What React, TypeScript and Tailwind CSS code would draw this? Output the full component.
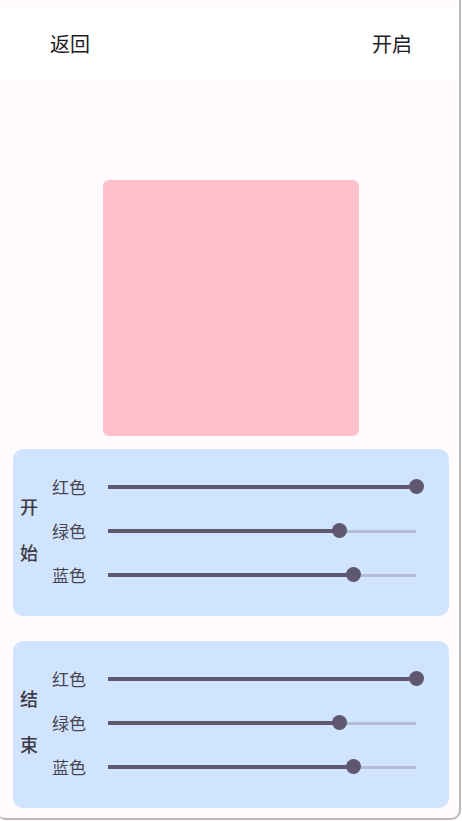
const font = { fontFamily: '"Noto Sans CJK SC", "Noto Sans", sans-serif' };

function Slider({ value }: { value: number }) {
  return (
    <div className="relative w-[308px] h-[16px]">
      <div className="absolute left-0 right-0 top-[7px] h-[3px] bg-[#b3bdd4]" />
      <div className="absolute left-0 top-[6.5px] h-[4px] bg-[#5f5670]" style={{ width: `${value * 100}%` }} />
      <div
        className="absolute top-[0.5px] w-[15px] h-[15px] -ml-[7.5px] rounded-full bg-[#5f5670]"
        style={{ left: `${value * 100}%` }}
      />
    </div>
  );
}

function ColorCard({ title, rgb }: { title: [string, string]; rgb: [number, number, number] }) {
  const names = ["红色", "绿色", "蓝色"];
  return (
    <div className="mx-[13px] h-[167px] rounded-[10px] bg-[#d1e4ff] flex items-center pl-[7px]">
      <div className="flex flex-col gap-[18px] pb-[8px] text-[18px] leading-[28px] font-medium text-[#3d3a44] w-[18px]">
        <span>{title[0]}</span>
        <span>{title[1]}</span>
      </div>
      <div className="flex flex-col gap-[16px] ml-[14px] pb-[4px]">
        {names.map((n, i) => (
          <div key={n} className="flex items-center h-[28px]">
            <span className="text-[17px] leading-[28px] text-[#49454f] w-[56px]">{n}</span>
            <Slider value={rgb[i] / 255} />
          </div>
        ))}
      </div>
    </div>
  );
}

export default function App() {
  const start: [number, number, number] = [255, 192, 203];
  const end: [number, number, number] = [255, 192, 203];
  return (
    <div className="relative w-[462px] h-[821px] bg-white overflow-hidden" style={font}>
      <div className="w-[462px] h-[821px] bg-[#fffbfe] flex flex-col pt-[6px]">
        <div className="h-[76px] bg-white flex items-center justify-between px-[50px] text-[20px] text-[#1c1b1f]">
          <span>返回</span>
          <span>开启</span>
        </div>
        <div className="flex justify-center pt-[98px] pb-[13px]">
          <div className="w-[256px] h-[256px] rounded-[6px] bg-[#ffc0cb]" />
        </div>
        <ColorCard title={["开", "始"]} rgb={start} />
        <div className="h-[25px]" />
        <ColorCard title={["结", "束"]} rgb={end} />
      </div>
      <div className="absolute left-[-4px] top-[-10px] w-[465px] h-[830px] border-r-2 border-b-2 border-[#b9b9b9] rounded-b-[10px] pointer-events-none" />
      <div className="absolute left-[461px] top-0 w-[1px] h-[821px] bg-white" />
    </div>
  );
}
